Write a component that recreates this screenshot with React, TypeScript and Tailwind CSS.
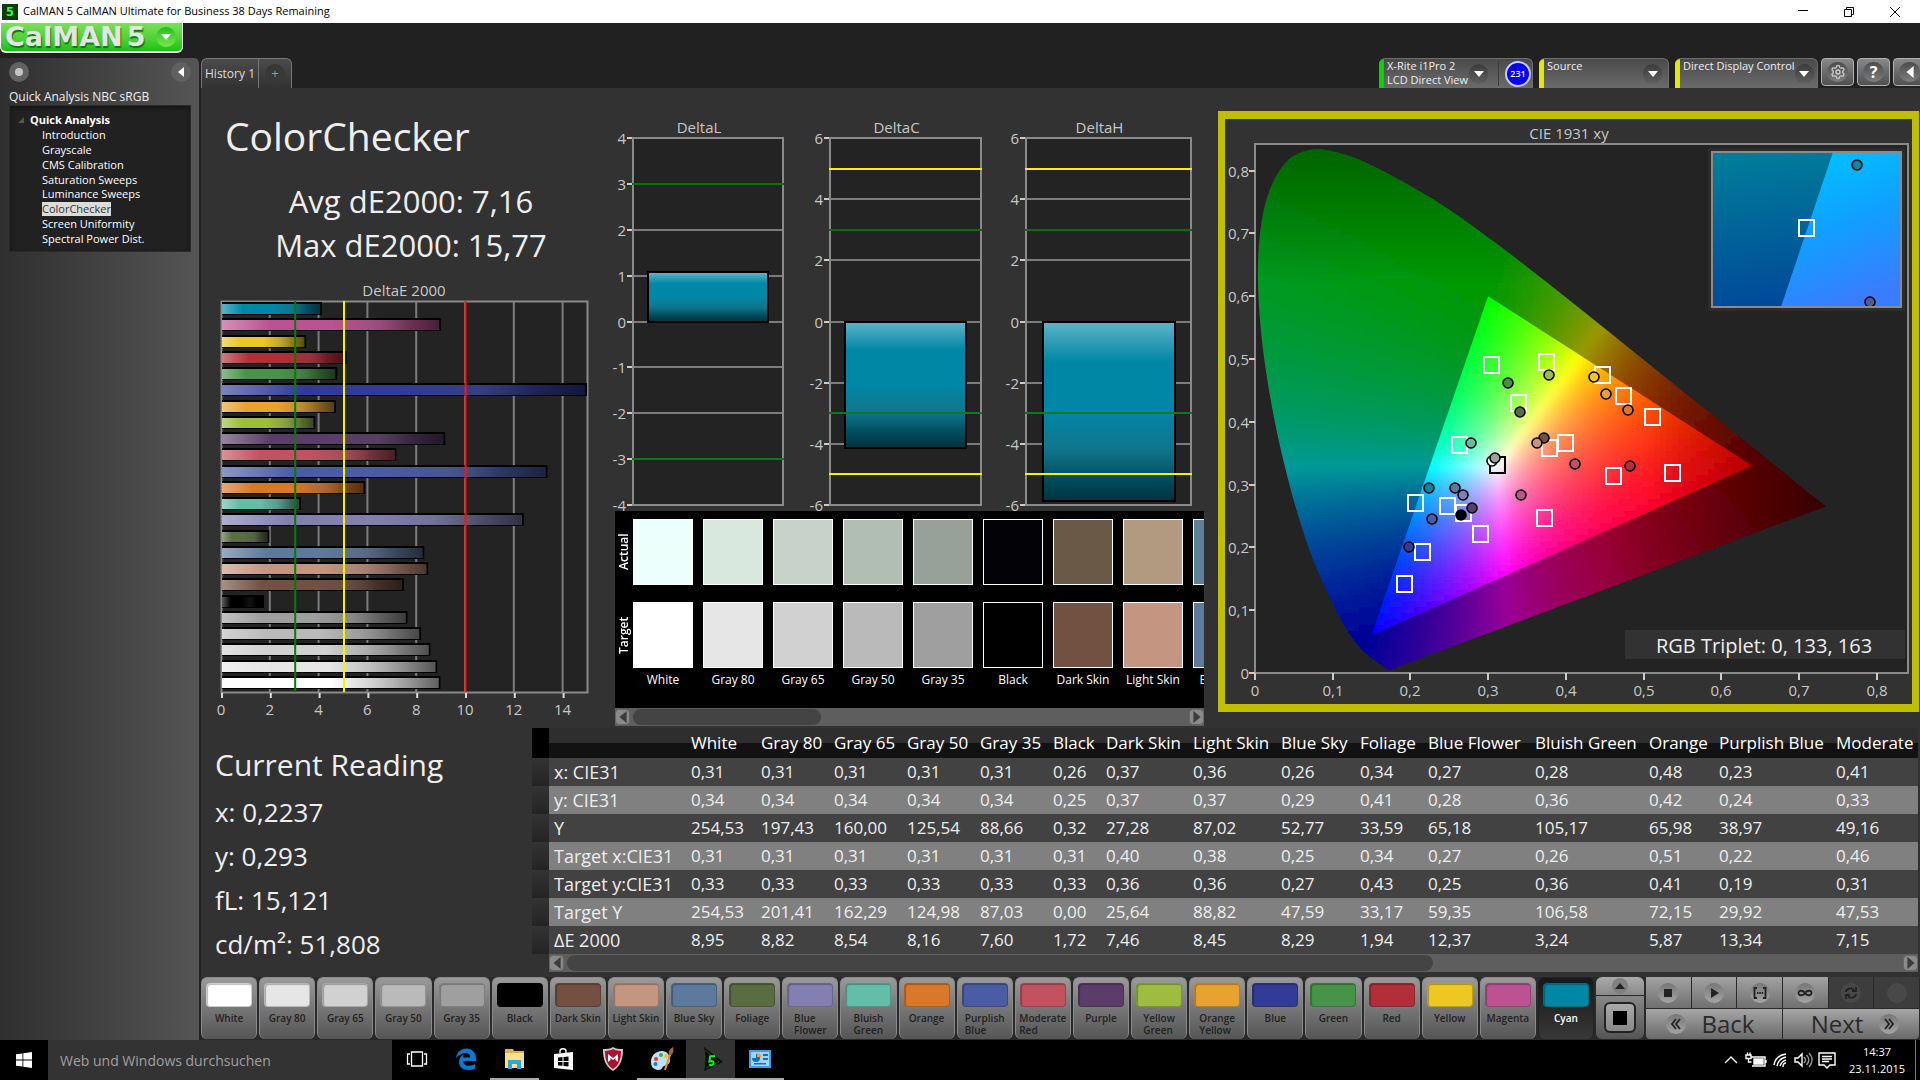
import type { ReactNode } from "react"
import clsx from "clsx"
import { Settings } from "lucide-react"

type Patch = { name: string; target: string; actual?: string; de: number }

const patches: Patch[] = [
  { name: "White", target: "#ffffff", actual: "#ecfffa", de: 8.95 },
  { name: "Gray 80", target: "#e6e6e6", actual: "#d9e8df", de: 8.82 },
  { name: "Gray 65", target: "#d1d1d1", actual: "#c7d3ca", de: 8.54 },
  { name: "Gray 50", target: "#bababa", actual: "#b1beb4", de: 8.16 },
  { name: "Gray 35", target: "#9f9f9f", actual: "#98a199", de: 7.6 },
  { name: "Black", target: "#000000", actual: "#020207", de: 1.72 },
  { name: "Dark Skin", target: "#735142", actual: "#6a5947", de: 7.46 },
  { name: "Light Skin", target: "#c49580", actual: "#b29a80", de: 8.45 },
  { name: "Blue Sky", target: "#5d7a9d", actual: "#5b8298", de: 8.29 },
  { name: "Foliage", target: "#5a6c42", de: 1.94 },
  { name: "Blue Flower", target: "#8380b1", de: 12.37 },
  { name: "Bluish Green", target: "#64bda9", de: 3.24 },
  { name: "Orange", target: "#d87828", de: 5.87 },
  { name: "Purplish Blue", target: "#4a5ca4", de: 13.34 },
  { name: "Moderate Red", target: "#c35261", de: 7.15 },
  { name: "Purple", target: "#5c3d6a", de: 9.15 },
  { name: "Yellow Green", target: "#9ebc40", de: 3.82 },
  { name: "Orange Yellow", target: "#e7a22f", de: 4.67 },
  { name: "Blue", target: "#323c96", de: 15.77 },
  { name: "Green", target: "#479347", de: 4.72 },
  { name: "Red", target: "#b02f39", de: 5.12 },
  { name: "Yellow", target: "#edc821", de: 3.45 },
  { name: "Magenta", target: "#bb5392", de: 8.97 },
  { name: "Cyan", target: "#0087a6", de: 4.1 },
]

const treeItems = [
  "Introduction",
  "Grayscale",
  "CMS Calibration",
  "Saturation Sweeps",
  "Luminance Sweeps",
  "ColorChecker",
  "Screen Uniformity",
  "Spectral Power Dist.",
]

const columnWidths = [17, 137, 70, 73, 73, 73, 73, 53, 87, 88, 79, 68, 107, 114, 70, 117, 87]

const tableRows: [string, string][] = [
  ["x: CIE31", "0,31 0,31 0,31 0,31 0,31 0,26 0,37 0,36 0,26 0,34 0,27 0,28 0,48 0,23 0,41"],
  ["y: CIE31", "0,34 0,34 0,34 0,34 0,34 0,25 0,37 0,37 0,29 0,41 0,28 0,36 0,42 0,24 0,33"],
  ["Y", "254,53 197,43 160,00 125,54 88,66 0,32 27,28 87,02 52,77 33,59 65,18 105,17 65,98 38,97 49,16"],
  ["Target x:CIE31", "0,31 0,31 0,31 0,31 0,31 0,31 0,40 0,38 0,25 0,34 0,27 0,26 0,51 0,22 0,46"],
  ["Target y:CIE31", "0,33 0,33 0,33 0,33 0,33 0,33 0,36 0,36 0,27 0,43 0,25 0,36 0,41 0,19 0,31"],
  ["Target Y", "254,53 201,41 162,29 124,98 87,03 0,00 25,64 88,82 47,59 33,17 59,35 106,58 72,15 29,92 47,53"],
  ["ΔE 2000", "8,95 8,82 8,54 8,16 7,60 1,72 7,46 8,45 8,29 1,94 12,37 3,24 5,87 13,34 7,15"],
]

const GlossStops = () => (
  <>
    <stop offset="0" stopColor="#fff" stopOpacity="0.36" />
    <stop offset="0.22" stopColor="#fff" stopOpacity="0" />
    <stop offset="0.5" stopColor="#444" stopOpacity="0" />
    <stop offset="0.7" stopColor="#444" stopOpacity="0.25" />
    <stop offset="0.86" stopColor="#000" stopOpacity="0.4" />
    <stop offset="1" stopColor="#000" stopOpacity="0.62" />
  </>
)

const DeltaEChart = () => {
  const left = 20
  const top = 34
  const width = 366
  const height = 391
  const x = (v: number) => left + v * 24.4
  const rows = [...patches].reverse()

  return (
    <svg viewBox="0 0 408 461" className="block w-full overflow-visible" role="img" aria-label="DeltaE 2000">
      <defs>
        <linearGradient id="gloss-h">
          <GlossStops />
        </linearGradient>
      </defs>
      <text x="203" y="29" textAnchor="middle" fontSize="15" fill="#c8c8c8">DeltaE 2000</text>
      <rect x={left} y={top} width={width} height={height} fill="#232323" />
      {[2, 4, 6, 8, 10, 12, 14].map((v) => (
        <line key={v} x1={x(v)} x2={x(v)} y1={top} y2={top + height} stroke="#7c7c7c" strokeWidth="2" />
      ))}
      <rect x={left + 0.5} y={top + 0.5} width={width} height={height} fill="none" stroke="#8a8a8a" strokeWidth="2" />
      {rows.map((p, i) => {
        const y = Math.round(top + 2 + i * 16.25)
        const w = Math.min(p.de, 14.96) * 24.4
        return (
          <g key={p.name}>
            <rect x={left + 1} y={y - 1} width={w} height="13" fill="#000" />
            <rect x={left + 1} y={y + 1} width={w - 2} height="10" fill={p.target} />
            <rect x={left + 1} y={y + 1} width={w - 2} height="10" fill="url(#gloss-h)" />
          </g>
        )
      })}
      <line x1={x(3) + 1} x2={x(3) + 1} y1={top} y2={top + height} stroke="#008000" strokeWidth="2" />
      <line x1={x(5) + 1} x2={x(5) + 1} y1={top} y2={top + height} stroke="#f4f400" strokeWidth="2" />
      <line x1={x(10) + 0.5} x2={x(10) + 0.5} y1={top} y2={top + height} stroke="#ff1010" strokeWidth="2" />
      {[0, 2, 4, 6, 8, 10, 12, 14].map((v) => (
        <g key={v}>
          <line x1={x(v) + 1} x2={x(v) + 1} y1={top + height + 1} y2={top + height + 6} stroke="#ddd" strokeWidth="2" />
          <text x={x(v)} y={top + height + 23} textAnchor="middle" fontSize="15" fill="#c8c8c8">{v}</text>
        </g>
      ))}
    </svg>
  )
}

type DeltaProps = {
  title: string
  left: number
  width: number
  max: number
  step: number
  value: number
  limits: { at: number; color: string }[]
}

const DeltaPlot = ({ title, left, width, max, step, value, limits }: DeltaProps) => {
  const top = 50
  const height = 367
  const y = (v: number) => Math.round(top + ((max - v) / (2 * max)) * height)
  const ticks: number[] = []
  for (let v = max; v >= -max; v -= step) ticks.push(v)
  const barTop = y(Math.max(value, 0))
  const barHeight = y(Math.min(value, 0)) - barTop
  const barX = left + Math.round(width * 0.1)
  const barW = Math.round(width * 0.8)

  return (
    <g>
      <text x={left + width / 2 - 9} y={45} textAnchor="middle" fontSize="15" fill="#c8c8c8">{title}</text>
      <rect x={left} y={top} width={width} height={height} fill="#232323" />
      {ticks.map((v) => (
        <g key={v}>
          <line x1={left} x2={left + width} y1={y(v)} y2={y(v)} stroke="#7c7c7c" strokeWidth="2" />
          <line x1={left - 6} x2={left} y1={y(v)} y2={y(v)} stroke="#ccc" strokeWidth="2" />
          <text x={left - 7} y={y(v) + 6} textAnchor="end" fontSize="15" fill="#c8c8c8">{v}</text>
        </g>
      ))}
      <rect x={left} y={top} width={width} height={height} fill="none" stroke="#8a8a8a" strokeWidth="2" />
      <rect x={barX - 1} y={barTop - 1} width={barW + 2} height={barHeight + 2} fill="#000" />
      <rect x={barX + 1} y={barTop + 1} width={barW - 2} height={barHeight - 2} fill="#0087a6" />
      <rect x={barX + 1} y={barTop + 1} width={barW - 2} height={barHeight - 2} fill="url(#gloss-v)" />
      {limits.map((l) => (
        <line key={l.at} x1={left - 1} x2={left + width + 1} y1={y(l.at)} y2={y(l.at)} stroke={l.color} strokeWidth="2" />
      ))}
    </g>
  )
}

const DeltaCharts = () => {
  const wide = [
    { at: 5, color: "#f4f400" },
    { at: 3, color: "#0a6e0a" },
    { at: -3, color: "#0a7a1a" },
    { at: -5, color: "#f4f400" },
  ]
  return (
    <svg viewBox="0 0 602 423" className="block w-full overflow-visible" role="img" aria-label="DeltaL, DeltaC and DeltaH">
      <defs>
        <linearGradient id="gloss-v" x1="0" x2="0" y1="0" y2="1">
          <GlossStops />
        </linearGradient>
      </defs>
      <DeltaPlot title="DeltaL" left={24} width={150} max={4} step={1} value={1.07} limits={wide.slice(1, 3)} />
      <DeltaPlot title="DeltaC" left={221} width={151} max={6} step={2} value={-4.13} limits={wide} />
      <DeltaPlot title="DeltaH" left={417} width={165} max={6} step={2} value={-5.87} limits={wide} />
    </svg>
  )
}

// ---- CIE 1931 diagram ----

const locus: [number, number][] = [
  [0.1741, 0.005], [0.1714, 0.0051], [0.1644, 0.0109], [0.1566, 0.0177], [0.144, 0.0297],
  [0.1355, 0.0399], [0.1241, 0.0578], [0.1096, 0.0868], [0.0913, 0.1327], [0.0687, 0.2007],
  [0.0454, 0.295], [0.0235, 0.4127], [0.0082, 0.5384], [0.0039, 0.6548], [0.0139, 0.7502],
  [0.0389, 0.812], [0.0743, 0.8338], [0.1142, 0.8262], [0.1547, 0.8059], [0.2296, 0.7543],
  [0.3016, 0.6923], [0.3731, 0.6245], [0.4441, 0.5547], [0.5125, 0.4866], [0.5752, 0.4242],
  [0.627, 0.3725], [0.6658, 0.334], [0.6915, 0.3083], [0.719, 0.2809], [0.7347, 0.2653],
]

const plot = { x: 30, y: 25, w: 653, h: 529 }
const cx = (x: number) => plot.x + x * 777
const cy = (y: number) => plot.y + plot.h - y * 628

const smoothPath = (points: [number, number][]) => {
  const p = points.map(([x, y]) => [cx(x), cy(y)])
  let d = `M${p[0][0]} ${p[0][1]}`
  for (let i = 0; i < p.length - 1; i++) {
    const a = p[Math.max(i - 1, 0)]
    const b = p[i]
    const c = p[i + 1]
    const e = p[Math.min(i + 2, p.length - 1)]
    d += ` C${b[0] + (c[0] - a[0]) / 6} ${b[1] + (c[1] - a[1]) / 6} ${c[0] - (e[0] - b[0]) / 6} ${c[1] - (e[1] - b[1]) / 6} ${c[0]} ${c[1]}`
  }
  return d + "Z"
}

const locusPath = smoothPath(locus)
const gamutPath = `M${cx(0.64)} ${cy(0.33)} L${cx(0.3)} ${cy(0.6)} L${cx(0.15)} ${cy(0.06)} Z`

const xyColor = (x: number, y: number, level: number) => {
  const z = 1 - x - y
  const rgb = [
    3.2406 * x - 1.5372 * y - 0.4986 * z,
    -0.9689 * x + 1.8758 * y + 0.0415 * z,
    0.0557 * x - 0.204 * y + 1.057 * z,
  ].map((v) => Math.max(v, 0))
  const peak = Math.max(...rgb, 0.0001)
  const redFall = level < 1 ? 2.3 : 2.1
  const fade = 1 - Math.max(0, x - (level < 1 ? 0.45 : 0.5)) * redFall - Math.max(0, y - 0.62) * 1.6
  return `rgb(${rgb.map((v) => Math.round(255 * level * fade * (v / peak))).join(",")})`
}

const CELL = 6

const cells = (x0: number, x1: number, y0: number, y1: number, level: number) => {
  const out: ReactNode[] = []
  for (let px = cx(x0); px < cx(x1); px += CELL) {
    for (let py = cy(y1); py < cy(y0); py += CELL) {
      const x = (px + CELL / 2 - plot.x) / 777
      const y = (plot.y + plot.h - py - CELL / 2) / 628
      if (x + y > 1.04) continue
      out.push(<rect key={`${px}-${py}`} x={px} y={py} width={CELL + 1} height={CELL + 1} fill={xyColor(x, y, level)} />)
    }
  }
  return out
}

const targets = [
  [267, 246], [322, 243], [378, 256], [294, 284], [399, 277], [428, 298], [235, 326], [325, 329],
  [341, 324], [389, 357], [448, 354], [191, 384], [223, 387], [239, 394], [256, 415], [320, 399],
  [198, 433], [180, 465],
]

const readings: [number, number, string][] = [
  [324, 256, "#9ebc40"], [283, 264, "#479347"], [369, 258, "#edc821"], [381, 275, "#e7a22f"],
  [403, 291, "#d87828"], [295, 293, "#5a6c42"], [319, 319, "#735142"], [312, 324, "#c49580"],
  [246, 324, "#64bda9"], [267, 342, "#ffffff"], [270, 339, "#9f9f9f"], [350, 345, "#c35261"],
  [405, 347, "#b02f39"], [204, 369, "#0087a6"], [230, 369, "#5d7a9d"], [238, 376, "#8380b1"],
  [296, 376, "#bb5392"], [247, 389, "#5c3d6a"], [236, 396, "#000000"], [207, 400, "#4a5ca4"],
  [184, 428, "#323c96"],
]

const CieChart = () => (
  <svg viewBox="0 0 687 585" className="block w-full" role="img" aria-label="CIE 1931 xy">
    <defs>
      <clipPath id="locus"><path d={locusPath} /></clipPath>
      <clipPath id="gamut"><path d={gamutPath} /></clipPath>
      <filter id="soft" x="-5%" y="-5%" width="110%" height="110%">
        <feGaussianBlur stdDeviation="3" />
      </filter>
      <linearGradient id="inset-dim" x1="0" x2="0.15" y1="0" y2="1">
        <stop offset="0" stopColor="#007f99" />
        <stop offset="1" stopColor="#004a99" />
      </linearGradient>
      <linearGradient id="inset-lit" x1="0.2" x2="0.5" y1="0" y2="1">
        <stop offset="0" stopColor="#00c4ff" />
        <stop offset="0.5" stopColor="#10a0ff" />
        <stop offset="1" stopColor="#3a7cff" />
      </linearGradient>
      <clipPath id="inset-clip"><rect x="487" y="33" width="189" height="155" /></clipPath>
    </defs>
    <text x="344" y="20" textAnchor="middle" fontSize="15" fill="#c8c8c8">CIE 1931 xy</text>
    <rect x={plot.x} y={plot.y} width={plot.w} height={plot.h} fill="#232323" stroke="#8a8a8a" strokeWidth="2" />

    <g clipPath="url(#locus)">
      <g filter="url(#soft)">{cells(-0.02, 0.76, -0.02, 0.86, 0.6)}</g>
    </g>
    <g clipPath="url(#gamut)">
      <g filter="url(#soft)">{cells(0.12, 0.67, 0.03, 0.63, 1)}</g>
    </g>

    {[0, 1, 2, 3, 4, 5, 6, 7, 8].map((n) => {
      const label = n === 0 ? "0" : `0,${n}`
      const tx = Math.round(cx(n / 10))
      const ty = Math.round(cy(n / 10))
      return (
        <g key={n}>
          <line x1={tx} x2={tx} y1="554" y2="561" stroke="#ccc" strokeWidth="2" />
          <text x={tx} y="577" textAnchor="middle" fontSize="15" fill="#c8c8c8">{label}</text>
          <line x1="24" x2="30" y1={ty} y2={ty} stroke="#ccc" strokeWidth="2" />
          <text x="24" y={ty + 6} textAnchor="end" fontSize="15" fill="#c8c8c8">{label}</text>
        </g>
      )
    })}

    {targets.map(([x, y]) => (
      <rect key={`${x}-${y}`} x={x - 8} y={y - 8} width="15" height="16" fill="none" stroke="#fff" strokeWidth="2" />
    ))}
    <rect x="265" y="338" width="15" height="16" fill="none" stroke="#000" strokeWidth="2" />
    {readings.map(([x, y, fill]) => (
      <circle key={`${x}-${y}`} cx={x} cy={y} r="5" fill={fill} stroke="#000" strokeWidth="1.6" />
    ))}

    <rect x="483" y="29" width="197" height="163" fill="#2c2c2c" />
    <rect x="487" y="33" width="189" height="155" fill="url(#inset-dim)" />
    <path d="M608 33 L676 33 L676 188 L556 188 Z" fill="url(#inset-lit)" />
    <g clipPath="url(#inset-clip)" stroke="#000" strokeWidth="1.6">
      <circle cx="632" cy="46" r="5" fill="#0087a6" />
      <circle cx="645" cy="183" r="5" fill="#4a5ca4" />
    </g>
    <rect x="574" y="101" width="15" height="16" fill="none" stroke="#fff" strokeWidth="2" />
    <rect x="487" y="33" width="189" height="155" fill="none" stroke="#8a8a8a" strokeWidth="2" />

    <rect x="400" y="511" width="280" height="29" fill="#323232" />
    <text x="539" y="534" textAnchor="middle" fontSize="20" fill="#eee">RGB Triplet: 0, 133, 163</text>
  </svg>
)

// ---- window chrome ----

const TitleBar = () => (
  <div className="flex h-[23px] items-center bg-white text-black">
    <span className="ml-0.5 flex size-4 items-center justify-center bg-[#0b3d0b] text-[13px] font-bold text-[#3f3]">5</span>
    <span className="ml-[5px] text-[11px]">CalMAN 5 CalMAN Ultimate for Business 38 Days Remaining</span>
    <svg viewBox="0 0 110 12" className="mr-4 ml-auto h-3 w-[110px]" fill="none" stroke="#000">
      <path d="M4 4.500h10M50.500 3.500h7v7h-7zM52.500 3.500v-2h7v7h-2M96 1l10 10M106 1l-10 10" />
    </svg>
  </div>
)

const Logo = () => (
  <button className="flex h-[30px] w-[183px] items-center justify-between rounded-b-md border-r border-b-2 border-l border-white bg-linear-to-b from-[#7be05a] to-[#06c40a] pr-1.5 pl-1" aria-label="CalMAN 5 menu">
    <span className="font-['DejaVu_Sans'] text-[27px] leading-[28px] font-bold whitespace-nowrap text-[#e4e4e4] [text-shadow:1px_2px_1px_#0a7a0a]">
      CalMAN<span className="ml-1">5</span>
    </span>
    <span className="flex size-5 items-center justify-center rounded-full bg-linear-to-b from-[#10c010] to-[#7ae84a]">
      <Triangle dir="down" className="w-2.5 text-white" />
    </span>
  </button>
)

const trianglePaths = { down: "M0 2h10L5 8z", up: "M0 8h10L5 2z", left: "M8 0v10L2 5z", right: "M2 0v10l6-5z" }

const Triangle = ({ dir, className }: { dir: keyof typeof trianglePaths; className?: string }) => (
  <svg viewBox="0 0 10 10" className={className} fill="currentColor"><path d={trianglePaths[dir]} /></svg>
)

const DeviceTab = ({ lines, accent, badge, className }: { lines: string[]; accent: string; badge?: string; className?: string }) => (
  <div className={clsx("flex h-full overflow-hidden rounded-t-md border-t border-r border-[#6e6e6e] bg-linear-to-b from-[#4a4a4a] to-[#6b6b6b]", className)}>
    <button className="flex grow items-start text-left">
      <span className={clsx("h-full w-[5px] shrink-0", accent)} />
      <span className="grow pl-[3px] text-[11px] leading-[14px] whitespace-nowrap text-[#eee]">
        {lines.map((l) => <span key={l} className="block">{l}</span>)}
      </span>
      <span className={clsx("mt-[5px] flex h-5 w-[19px] shrink-0 items-center justify-center rounded-full bg-linear-to-b from-[#3c3c3c] to-[#606060]", badge ? "mr-2.5" : "mr-1.5")}>
        <Triangle dir="down" className="w-2.5 text-white" />
      </span>
    </button>
    {badge && (
      <span className="my-0.5 flex items-center border-l border-[#3c3c3c] pr-px pl-1.5">
        <span className="flex size-[26px] items-center justify-center rounded-full border-2 border-[#ccccff] bg-[#0000fa] text-[9px] font-semibold text-white">{badge}</span>
      </span>
    )}
  </div>
)

const toolButton = "flex h-7 w-[33px] items-center justify-center rounded-sm border border-[#b0b0b0] bg-linear-to-b from-[#888] to-[#505050]"
const toolKnob = "flex h-5 w-[21px] items-center justify-center rounded-full bg-linear-to-b from-[#4c4c4c] to-[#7d7d7d]"

const TabRow = () => (
  <div className="flex h-[30px] bg-[#212121]">
    <div className="flex overflow-hidden rounded-t-md border-t border-r border-l border-[#777] bg-linear-to-b from-[#4b4b4b] to-[#323232]">
      <button className="w-[57px] border-r border-[#777] text-[12px] text-[#ddd]">History 1</button>
      <button className="flex w-8 items-center justify-center" aria-label="Add history">
        <span className="flex size-5 items-center justify-center rounded-full bg-[#383838] text-[13px] text-[#999]">+</span>
      </button>
    </div>
    <div className="ml-auto flex gap-1.5">
      <DeviceTab lines={["X-Rite i1Pro 2", "LCD Direct View"]} accent="bg-[#00d800]" badge="231" className="w-[154px]" />
      <DeviceTab lines={["Source"]} accent="bg-[#e6e600]" className="w-[130px]" />
      <DeviceTab lines={["Direct Display Control"]} accent="bg-[#e6e600]" className="w-[143px]" />
    </div>
    <div className="ml-[3px] flex w-[99px] shrink-0 gap-[3px] overflow-hidden">
      <button className={clsx(toolButton, "shrink-0")} aria-label="Settings">
        <span className={toolKnob}><Settings size={16} color="#ccc" /></span>
      </button>
      <button className={clsx(toolButton, "shrink-0")} aria-label="Help">
        <span className={clsx(toolKnob, "text-[16px] font-bold text-white")}>?</span>
      </button>
      <button className={clsx(toolButton, "shrink-0")} aria-label="Collapse">
        <span className={toolKnob}><Triangle dir="left" className="w-3 text-white" /></span>
      </button>
    </div>
  </div>
)

const Sidebar = () => (
  <aside className="w-[201px] shrink-0 rounded-tr-md border-r-2 border-[#222] bg-linear-to-r from-[#2f2f2f] to-[#555] pt-1 pr-2 pl-[9px]">
    <div className="flex justify-between">
      <button className="flex size-5 items-center justify-center rounded-full bg-[#626262]" aria-label="Record">
        <span className="size-2 rounded-full bg-[#c4c4c4]" />
      </button>
      <button className="flex size-5 items-center justify-center rounded-full bg-[#606060]" aria-label="Hide sidebar">
        <Triangle dir="left" className="w-2.5 text-white" />
      </button>
    </div>
    <div className="mt-1 h-[19px] text-[12px] leading-[22px] whitespace-nowrap text-[#eee]">Quick Analysis NBC sRGB</div>
    <nav className="h-[147px] border border-[#2a2a2a] bg-[#212121] pt-1.5 text-[11px] text-white shadow-[inset_0_2px_4px_#141414]">
      <div className="flex h-4 items-center gap-1.5 pl-2 font-bold">
        <svg viewBox="0 0 6 6" className="w-1.5"><path d="M6 0v6H0z" fill="#555" /></svg>
        Quick Analysis
      </div>
      <ul className="flex h-[118px] flex-col pl-8">
        {treeItems.map((item) => (
          <li key={item} className="flex flex-1 items-center">
            <a href="#" className={clsx("leading-[14px]", item === "ColorChecker" && "bg-[#dcdcd8] text-[#333]")}>{item}</a>
          </li>
        ))}
      </ul>
    </nav>
  </aside>
)

const ScrollBar = ({ thumb, label }: { thumb: string; label: string }) => (
  <div className="flex h-[18px] items-center gap-[3px] bg-[#5e5e5e]" aria-label={label}>
    <button className="flex h-4 w-[15px] items-center justify-center rounded-sm border border-[#666] bg-[#8a8a8a]" aria-label={`${label} left`}>
      <Triangle dir="left" className="w-3 text-[#3c3c3c]" />
    </button>
    <div className="grow">
      <div className={clsx("h-4 rounded-lg bg-[#444]", thumb)} />
    </div>
    <button className="flex h-4 w-[15px] items-center justify-center rounded-sm border border-[#666] bg-[#8a8a8a]" aria-label={`${label} right`}>
      <Triangle dir="right" className="w-3 text-[#3c3c3c]" />
    </button>
  </div>
)

const SwatchPanel = () => (
  <div className="mr-[7px] ml-1.5 bg-black">
    <div className="flex h-[197px] pt-2">
      <div className="flex w-[18px] shrink-0 flex-col gap-[17px] text-[12px] font-semibold text-white">
        <span className="flex h-[66px] rotate-180 items-center justify-center [writing-mode:vertical-rl]">Actual</span>
        <span className="flex h-[66px] rotate-180 items-center justify-center [writing-mode:vertical-rl]">Target</span>
      </div>
      <div className="flex min-w-0 gap-2.5 overflow-hidden">
        {patches.slice(0, 9).map((p) => (
          <div key={p.name} className="w-[60px] shrink-0 text-center text-[12px] whitespace-nowrap text-white">
            <div className="h-[66px] border border-white" style={{ background: p.actual }} />
            <div className="mt-[17px] h-[66px] border border-white" style={{ background: p.target }} />
            <div className="mt-1 leading-4">{p.name}</div>
          </div>
        ))}
      </div>
    </div>
    <ScrollBar thumb="w-[34%]" label="Swatches" />
  </div>
)

const ReadingTable = () => (
  <div className="mr-0.5 min-w-0 grow">
    <div className="overflow-hidden">
      <table className="w-[1386px] table-fixed border-collapse text-left text-[17px] text-[#eee]">
        <colgroup>
          {columnWidths.map((w, i) => <col key={i} style={{ width: w }} />)}
        </colgroup>
        <thead>
          <tr className="h-[30px] bg-linear-to-b from-[#2e2e2e] from-50% to-[#121212] to-50% text-white">
            <th className="bg-black" />
            <th />
            {patches.slice(0, 15).map((p) => (
              <th key={p.name} className="py-0 pl-[5px] leading-7 font-normal whitespace-nowrap">
                {p.name === "Moderate Red" ? "Moderate" : p.name}
              </th>
            ))}
          </tr>
        </thead>
        <tbody>
          {tableRows.map(([label, values], i) => (
            <tr key={label} className={clsx("h-7", i % 2 ? "bg-[#808080]" : "bg-[#424242]")}>
              <td className="bg-linear-to-b from-[#333] to-[#242424] p-0" />
              <th className="py-0 pl-[5px] text-[18px] leading-7 font-normal whitespace-nowrap">{label}</th>
              {values.split(" ").map((v, j) => (
                <td key={j} className="py-0 pl-[5px] leading-7">{v}</td>
              ))}
            </tr>
          ))}
        </tbody>
      </table>
    </div>
    <div className="ml-[17px]">
      <ScrollBar thumb="w-[65%]" label="Table" />
    </div>
  </div>
)

const CurrentReading = () => (
  <section className="w-[331px] shrink-0 pt-[15px] pl-3.5 text-[#eee]">
    <h2 className="text-[30px] leading-[44px]">Current Reading</h2>
    {["x: 0,2237", "y: 0,293", "fL: 15,121", "cd/m²: 51,808"].map((line, i) => (
      <p key={line} className={clsx("text-[26px] leading-[44px]", i === 0 && "mt-[3px]")}>{line}</p>
    ))}
  </section>
)

// ---- bottom strip ----

const grayFace = "bg-linear-to-b from-[#9a9a9a] to-[#555]"

const SwatchButton = ({ patch, active }: { patch: Patch; active: boolean }) => (
  <button
    className={clsx(
      "flex h-[62px] min-w-0 flex-1 flex-col items-center rounded-md border-x border-t pt-[5px]",
      active ? "border-[#222] bg-linear-to-b from-[#181818] to-[#383838] text-white" : clsx(grayFace, "border-[#8a8a8a] text-[#222]"),
    )}
  >
    <span className="h-6 w-[46px] rounded-[4px] border border-black/20 shadow-[inset_1px_1px_1px_#0004]" style={{ background: patch.target }} />
    <span className="mt-[5px] text-left text-[10px] leading-3 font-semibold">
      {patch.name.length > 10
        ? patch.name.split(" ").map((w) => <span key={w} className="block">{w}</span>)
        : patch.name}
    </span>
  </button>
)

const knob = "flex size-5 items-center justify-center rounded-full bg-linear-to-b from-[#777] to-[#a4a4a4]"

const TransportIcon = ({ d, fill }: { d: string; fill?: boolean }) => (
  <svg viewBox="0 0 16 16" className="w-4" fill={fill ? "#222" : "none"} stroke={fill ? "none" : "#222"} strokeWidth="1.8">
    <path d={d} />
  </svg>
)

const transport = [
  { label: "Stop", d: "M4 4h8v8H4z", fill: true },
  { label: "Read", d: "M5 3v10l8-5z", fill: true },
  { label: "Read series", d: "M5 3H2.500v10H5M11 3h2.500v10H11M5 8h1.500M7.300 8h1.500M9.700 8h1.500" },
  { label: "Read continuous", d: "M8 8C6.500 5.500 1.500 4.500 1.500 8S6.500 10.500 8 8s6.500-3.500 6.500 0S9.500 10.500 8 8z" },
]

const ControlStrip = () => (
  <div className="flex h-[63px] gap-0.5 bg-[#2a2a2a]">
    <div className="flex min-w-0 grow gap-0.5">
      {patches.map((p) => <SwatchButton key={p.name} patch={p} active={p.name === "Cyan"} />)}
    </div>
    <div className="flex w-12 shrink-0 flex-col gap-px">
      <button className="flex h-[18px] items-center justify-center rounded-t-md bg-linear-to-b from-[#aaa] to-[#8a8a8a]" aria-label="Expand">
        <span className="flex size-4 items-center justify-center rounded-full bg-[#808080]"><Triangle dir="up" className="w-2.5 text-[#222]" /></span>
      </button>
      <button className="flex h-[43px] items-center justify-center rounded-b-md bg-linear-to-b from-[#888] to-[#555]" aria-label="Pattern window">
        <span className="flex h-[31px] w-8 items-center justify-center rounded-md border-2 border-[#222] bg-linear-to-b from-[#aaa] to-[#888]">
          <span className="size-3.5 bg-black" />
        </span>
      </button>
    </div>
    <div className="flex w-[274px] shrink-0 flex-col gap-px pr-px">
      <div className="grid h-[31px] grid-cols-6 gap-px">
        {transport.map((t) => (
          <button key={t.label} className="flex items-center justify-center bg-linear-to-b from-[#a2a2a2] to-[#707070]" aria-label={t.label}>
            <span className={knob}><TransportIcon d={t.d} fill={t.fill} /></span>
          </button>
        ))}
        <button className="flex items-center justify-center bg-[#3d3d3d]" aria-label="Refresh">
          <span className="flex size-5 items-center justify-center rounded-full bg-[#484848]">
            <TransportIcon d="M3 7c0-3 5-5 8-2.500M13 2v4H9M13 9c0 3-5 5-8 2.500M3 14v-4h4" />
          </span>
        </button>
        <button className="flex items-center justify-center bg-[#3d3d3d]" aria-label="Unused">
          <span className="size-5 rounded-full bg-[#484848]" />
        </button>
      </div>
      <div className="grid h-[30px] grid-cols-2 gap-px text-[24px] leading-[28px] font-medium text-[#2a2a2a]">
        <button className="flex items-center justify-center gap-4 rounded-bl-sm bg-linear-to-b from-[#a6a6a6] to-[#6a6a6a] pr-2">
          <span className={knob}><TransportIcon d="M8 3L4 8l4 5M12 3L8 8l4 5" /></span>
          Back
        </button>
        <button className="flex items-center justify-center gap-4 rounded-br-sm bg-linear-to-b from-[#a6a6a6] to-[#6a6a6a] pl-2">
          Next
          <span className={knob}><TransportIcon d="M4 3l4 5-4 5M8 3l4 5-4 5" /></span>
        </button>
      </div>
    </div>
  </div>
)

// ---- taskbar ----

const TaskIcon = ({ label, open, active, children }: { label: string; open?: boolean; active?: boolean; children: ReactNode }) => (
  <button
    className={clsx(
      "flex h-full w-[49px] items-center justify-center border-b-2",
      active ? "bg-[#333]" : "bg-black",
      open ? "border-[#aaa]" : "border-transparent",
    )}
    aria-label={label}
  >
    <svg viewBox="0 0 24 24" className="size-6">{children}</svg>
  </button>
)

const Taskbar = () => (
  <footer className="flex h-10 shrink-0 bg-black text-white">
    <button className="flex w-12 items-center justify-center" aria-label="Start">
      <svg viewBox="0 0 16 16" className="w-4" fill="#fff">
        <path d="M0 2.300L6.500 1.400v6.200H0zM7.300 1.300L16 0v7.600H7.300zM0 8.400h6.500v6.200L0 13.700zM7.300 8.400H16V16l-8.700-1.300z" />
      </svg>
    </button>
    <input type="search" aria-label="Web und Windows durchsuchen" placeholder="Web und Windows durchsuchen" className="w-[344px] bg-[#333] px-3 text-[14px] placeholder:text-[#a0a0a0]" />
    <div className="flex">
      <TaskIcon label="Task view">
        <path d="M6.500 5h11v14h-11zM5 7H2.500v10H5M19 7h2.500v10H19" fill="none" stroke="#fff" strokeWidth="1.3" />
      </TaskIcon>
      <TaskIcon label="Edge">
        <path d="M2 11C3 5 7 1.500 12.500 1.500 18.500 1.500 22 6 22 11.500V14H9c.2 3.500 3.200 4.800 6 4.800 2.400 0 4.300-.6 6-1.700v4.400C19 22.600 16.700 23 14.300 23 8.500 23 5 19.500 5 15c0-3.600 1.900-6 5-7.500-.7 1-1 2-1 3h7.200c0-3-1.400-4.500-4.200-4.500C8 6 4.500 8 2 11z" fill="#0a78d7" />
      </TaskIcon>
      <TaskIcon label="Explorer" open>
        <path d="M2 2h8l1 2h10v17H2z" fill="#e3b341" />
        <path d="M2 6h19v15H2z" fill="#fbe08a" />
        <path d="M5 22v-9h13v9h-4v-5H9v5z" fill="#2ea7e0" />
      </TaskIcon>
      <TaskIcon label="Store">
        <path d="M8 6V4c0-3 6-3 6 0v2" fill="none" stroke="#fff" strokeWidth="1.400" />
        <path d="M2 7l19-2v18L2 21z" fill="#fff" />
        <path d="M6 10.500l4.500-.5v4H6zM11.500 10l5-.6V14h-5zM6 15h4.500v3.800L6 18.400zM11.500 15h5v4.500l-5-.6z" fill="#000" />
      </TaskIcon>
      <TaskIcon label="McAfee">
        <path d="M12 0c3 2 6 2 10 2 0 10-2 17-10 22C4 19 2 12 2 2c4 0 7 0 10-2z" fill="#ccc" />
        <path d="M12 2c3 1.500 5 1.800 8 2 0 8-2 14-8 18C6 18 4 12 4 4c3-.2 5-.5 8-2z" fill="#b01030" />
        <path d="M7 15V7l5 4 5-4v8l-2.500-2v-2L12 13l-2.500-2v2z" fill="#fff" />
      </TaskIcon>
      <TaskIcon label="Paint" open>
        <path d="M12 4C5 4 1 9 1 15s4 8 8 8c3 0 3-3 5-4s6-1 6-6-3-9-8-9z" fill="#bfe0f2" />
        <circle cx="6" cy="12" r="2" fill="#e23b2e" />
        <circle cx="11" cy="8" r="2" fill="#3aa845" />
        <circle cx="5.500" cy="17" r="2" fill="#2c6fd1" />
        <circle cx="16" cy="9" r="2" fill="#f0c030" />
        <path d="M14 23l5-16 2 1-5 15z" fill="#e0902c" />
        <path d="M19 7c-1-3 1-5 4-7 1 4 0 7-2 8z" fill="#a0683a" />
      </TaskIcon>
      <TaskIcon label="CalMAN 5" open active>
        <path d="M5 0l19 15-19 9c2-8 2-15 0-24z" fill="#021002" />
        <path d="M6 3l14 12-13 6" fill="none" stroke="#0a5a0a" />
        <path d="M16 9l-5 .5-.5 5c3-1 4.500 0 4 2s-3 2-4.500 1" fill="none" stroke="#1cf01c" strokeWidth="2" />
      </TaskIcon>
      <TaskIcon label="Control panel" open>
        <path d="M1 3h22v18H1z" fill="#3aa0e8" />
        <path d="M3 5h18v14H3z" fill="#9fd4f8" />
        <path d="M8 7v4H4a4 4 0 1 0 4-4z" fill="#1a6cc0" />
        <path d="M9 6v4h4a4 4 0 0 0-4-4z" fill="#f0a030" />
        <path d="M15 7h5v2h-5zM15 11h5v2h-5zM6 16h12v1.500H6z" fill="#1a6cc0" />
      </TaskIcon>
    </div>
    <div className="ml-auto flex items-center">
      <svg viewBox="0 0 112 20" className="mr-[7px] h-5 w-28" fill="none" stroke="#fff" strokeWidth="1.400">
        <path d="M1 13l6-6 6 6" />
        <path d="M27 7h14v9H28M42 10v3M22 5h5v3.500h-5zM23.500 2.500V5M26 2.500V5M24.500 9v3h3" />
        <path d="M30 9h9v5h-9z" fill="#fff" />
        <path d="M50 15c1-6 5-10 12-11M53 16c1-5 4-8 9-9M56 16c1-3 3-5 6-6M59 17c0-2 1-4 3-4" />
        <path d="M71 8h3l4-4v12l-4-4h-3z" />
        <path d="M80 7c2 2 2 4 0 6M82.500 5c3 3 3 7 0 10M85 3c4 4 4 10 0 14" stroke="#999" />
        <path d="M95 3h16v12h-5l-3 3-3-3h-5zM98 6.500h10M98 9h10M98 11.500h7" />
      </svg>
      <div className="w-[68px] text-center text-[11px] leading-[17px]">
        <div>14:37</div>
        <div>23.11.2015</div>
      </div>
      <div className="ml-1 h-full w-[5px] border-l border-[#777]" />
    </div>
  </footer>
)

export default function App() {
  return (
    <div className="flex min-h-screen flex-col overflow-hidden bg-[#212121] font-['Open_Sans',sans-serif]">
      <TitleBar />
      <header className="h-[35px]">
        <Logo />
      </header>
      <div className="flex grow">
        <Sidebar />
        <main className="flex min-w-0 grow flex-col bg-[#323232]">
          <TabRow />
          <div className="grid grow grid-cols-[408fr_602fr_709fr] items-start">
            <section className="min-w-0 pt-6 text-[#eee]">
              <h1 className="pl-6 text-[39px] leading-[48px]">ColorChecker</h1>
              <div className="mt-[19px] pl-3 text-center text-[31px] leading-[44px]">
                <p>Avg dE2000: 7,16</p>
                <p>Max dE2000: 15,77</p>
              </div>
              <DeltaEChart />
            </section>
            <section className="min-w-0">
              <DeltaCharts />
              <SwatchPanel />
            </section>
            <section className="min-w-0 pt-[23px] pr-px pl-[7px]">
              <div className="border-x-7 border-y-8 border-[#bfbf00]">
                <CieChart />
              </div>
            </section>
          </div>
          <div className="flex h-[249px]">
            <CurrentReading />
            <ReadingTable />
          </div>
          <ControlStrip />
        </main>
      </div>
      <Taskbar />
    </div>
  )
}
